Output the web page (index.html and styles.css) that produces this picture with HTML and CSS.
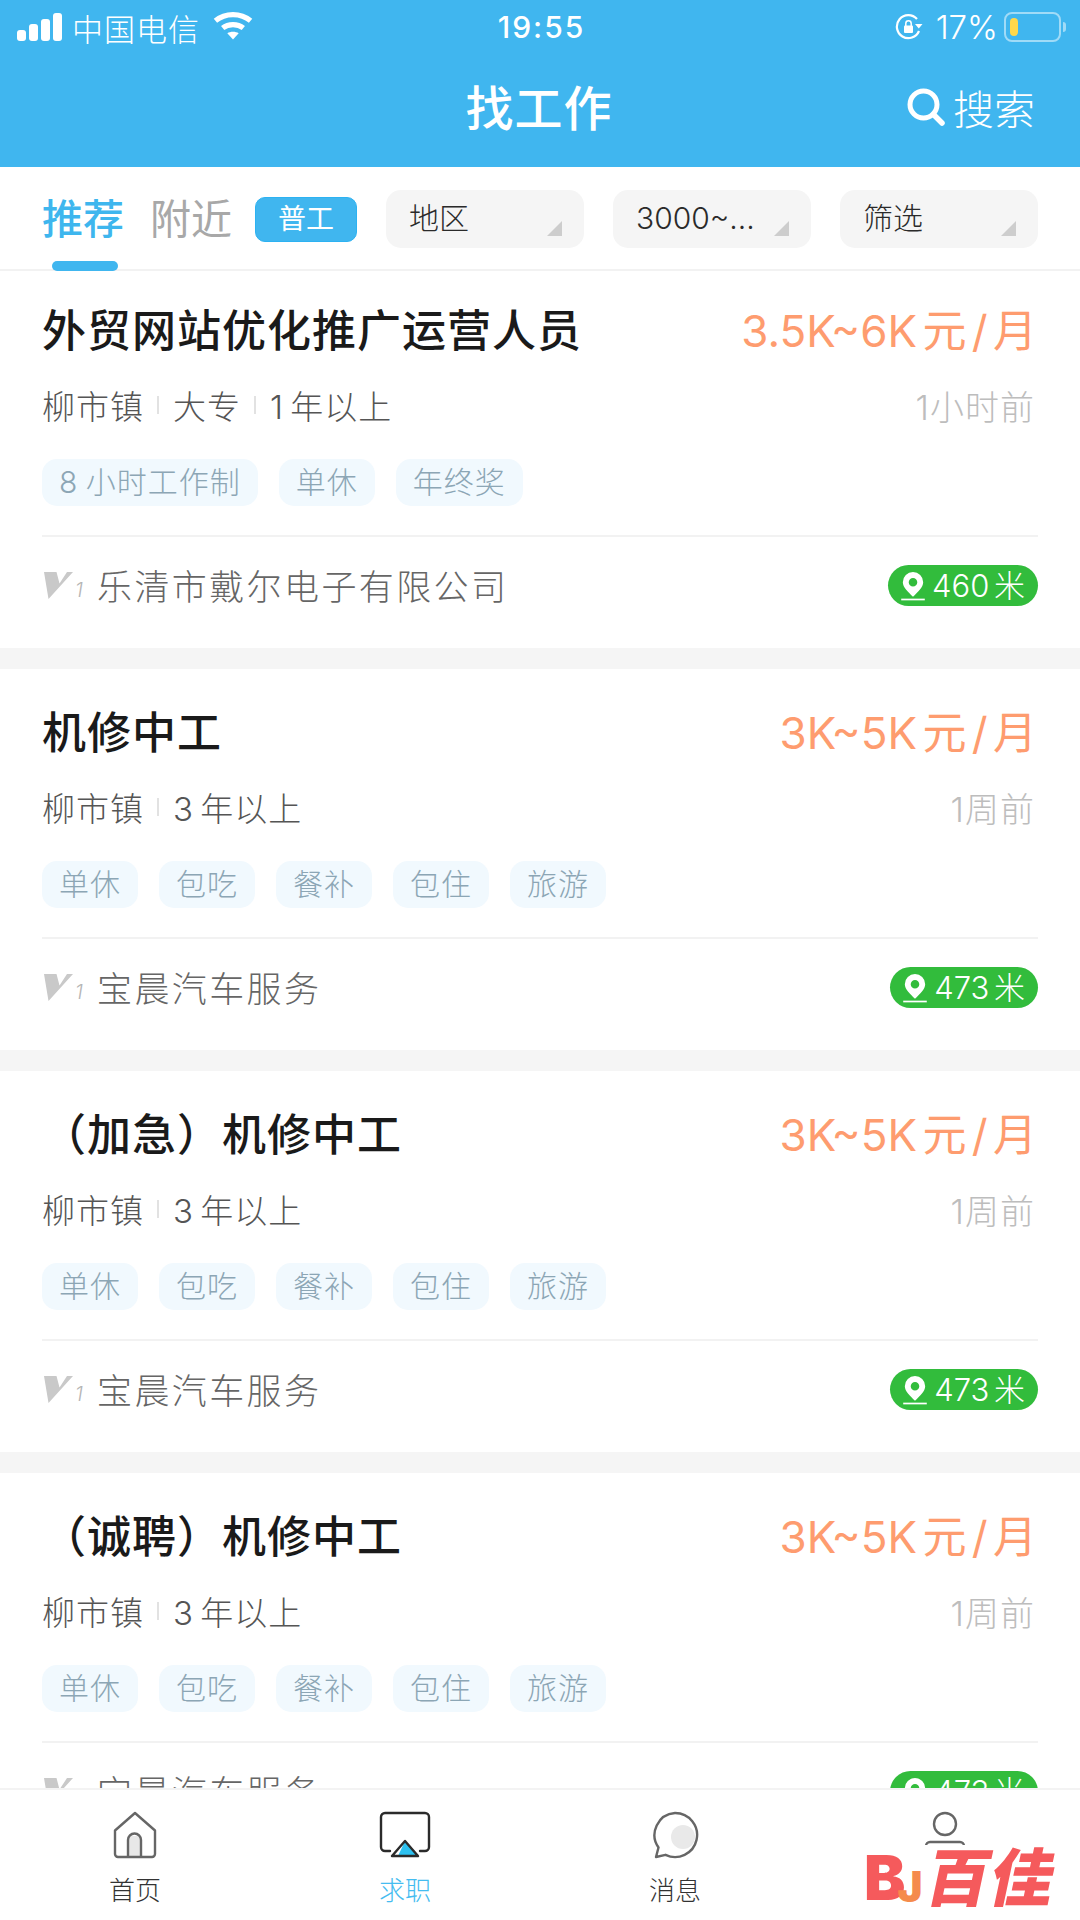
FILE: index.html
```html
<!DOCTYPE html>
<html lang="zh-CN">
<head>
    <meta charset="UTF-8">
    <meta name="viewport" content="width=device-width, initial-scale=1.0">
    <title>找工作</title>
    <link rel="stylesheet" href="styles.css">
</head>
<body>
<svg class="sprite" width="0" height="0">
    <symbol id="level-v" viewBox="0 0 29 27">
        <polygon points="0,0 12.5,0 15.5,11.5 23,0 29,0 4.5,27" fill="#c9c9c9"/>
    </symbol>
    <symbol id="pin" viewBox="0 0 22 28">
        <path fill="#fff" fill-rule="evenodd" d="M11 1a9.5 9.5 0 0 1 9.5 9.5c0 4.6-4.8 9-9.5 13.5C6.300 19.500 1.500 15.100 1.500 10.500A9.500 9.500 0 0 1 11 1zm0 5.500a4 4 0 1 0 0 8 4 4 0 0 0 0-8z"/>
        <rect x="0" y="25.800" width="22" height="1.600" fill="#fff"/>
    </symbol>
</svg>

<div class="page">
    <header class="top">
        <div class="status">
            <div class="status__left">
                <svg class="icon-signal" width="46" height="28" viewBox="0 0 46 28" fill="#fff">
                    <rect x="0" y="17" width="9" height="11" rx="3"/>
                    <rect x="12" y="11" width="9" height="17" rx="3"/>
                    <rect x="24" y="6" width="9" height="22" rx="3"/>
                    <rect x="36" y="0" width="9" height="28" rx="3"/>
                </svg>
                <span class="status__carrier">中国电信</span>
                <svg class="icon-wifi" width="42" height="31" viewBox="0 0 40 30">
                    <path d="M3 10.500C12.500 2.500 27.500 2.500 37 10.500" fill="none" stroke="#fff" stroke-width="5"/>
                    <path d="M10 17.500C15.500 13 24.500 13 30 17.500" fill="none" stroke="#fff" stroke-width="5"/>
                    <path d="M14.500 22.500C17.500 20.500 22.500 20.500 25.500 22.500L20 28.500Z" fill="#fff"/>
                </svg>
            </div>
            <div class="status__time">19:55</div>
            <div class="status__right">
                <svg class="icon-rotate" width="28" height="28" viewBox="0 0 28 28">
                    <path d="M24 18A11.500 11.500 0 1 1 22 6" fill="none" stroke="#fff" stroke-width="2.200"/>
                    <path d="M20 11h7.500l-3.700 4.500z" fill="#fff"/>
                    <rect x="9" y="12.500" width="9" height="7.500" rx="1" fill="#fff"/>
                    <path d="M10.800 13V10.500a2.700 2.700 0 0 1 5.400 0V13" fill="none" stroke="#fff" stroke-width="1.500"/>
                </svg>
                <span class="status__percent">17%</span>
                <div class="battery"><div class="battery__level"></div></div>
                <div class="battery__nub"></div>
            </div>
        </div>
        <div class="titlebar">
            <h1 class="titlebar__title">找工作</h1>
            <div class="titlebar__search">
                <svg width="38" height="38" viewBox="0 0 38 38">
                    <circle cx="16.500" cy="16.500" r="13.500" fill="none" stroke="#fff" stroke-width="5"/>
                    <path d="M26.500 26.500L35 35" stroke="#fff" stroke-width="5.500" stroke-linecap="round"/>
                </svg>
                <span>搜索</span>
            </div>
        </div>
    </header>

    <nav class="filters">
        <div class="tabs">
            <div class="tabs__item tabs__item_active">推荐</div>
            <div class="tabs__item">附近</div>
        </div>
        <div class="category">普工</div>
        <div class="filter">地区</div>
        <div class="filter">3000~...</div>
        <div class="filter">筛选</div>
    </nav>

    <main class="jobs">
        <article class="job">
            <div class="job__row">
                <h2 class="job__title">外贸网站优化推广运营人员</h2>
                <div class="job__pay">3.5K~6K 元 / 月</div>
            </div>
            <div class="job__row job__row_meta">
                <div class="job__meta"><span>柳市镇</span><i></i><span>大专</span><i></i><span>1 年以上</span></div>
                <div class="job__time">1小时前</div>
            </div>
            <div class="job__tags"><span>8 小时工作制</span><span>单休</span><span>年终奖</span></div>
            <div class="job__company">
                <svg class="job__level" width="29" height="27"><use href="#level-v"/></svg><em>1</em>
                <span class="job__name">乐清市戴尔电子有限公司</span>
                <div class="distance"><svg width="24" height="30"><use href="#pin"/></svg><span>460 米</span></div>
            </div>
        </article>

        <article class="job">
            <div class="job__row">
                <h2 class="job__title">机修中工</h2>
                <div class="job__pay">3K~5K 元 / 月</div>
            </div>
            <div class="job__row job__row_meta">
                <div class="job__meta"><span>柳市镇</span><i></i><span>3 年以上</span></div>
                <div class="job__time">1周前</div>
            </div>
            <div class="job__tags"><span>单休</span><span>包吃</span><span>餐补</span><span>包住</span><span>旅游</span></div>
            <div class="job__company">
                <svg class="job__level" width="29" height="27"><use href="#level-v"/></svg><em>1</em>
                <span class="job__name">宝晨汽车服务</span>
                <div class="distance"><svg width="24" height="30"><use href="#pin"/></svg><span>473 米</span></div>
            </div>
        </article>

        <article class="job">
            <div class="job__row">
                <h2 class="job__title">（加急）机修中工</h2>
                <div class="job__pay">3K~5K 元 / 月</div>
            </div>
            <div class="job__row job__row_meta">
                <div class="job__meta"><span>柳市镇</span><i></i><span>3 年以上</span></div>
                <div class="job__time">1周前</div>
            </div>
            <div class="job__tags"><span>单休</span><span>包吃</span><span>餐补</span><span>包住</span><span>旅游</span></div>
            <div class="job__company">
                <svg class="job__level" width="29" height="27"><use href="#level-v"/></svg><em>1</em>
                <span class="job__name">宝晨汽车服务</span>
                <div class="distance"><svg width="24" height="30"><use href="#pin"/></svg><span>473 米</span></div>
            </div>
        </article>

        <article class="job">
            <div class="job__row">
                <h2 class="job__title">（诚聘）机修中工</h2>
                <div class="job__pay">3K~5K 元 / 月</div>
            </div>
            <div class="job__row job__row_meta">
                <div class="job__meta"><span>柳市镇</span><i></i><span>3 年以上</span></div>
                <div class="job__time">1周前</div>
            </div>
            <div class="job__tags"><span>单休</span><span>包吃</span><span>餐补</span><span>包住</span><span>旅游</span></div>
            <div class="job__company">
                <svg class="job__level" width="29" height="27"><use href="#level-v"/></svg><em>1</em>
                <span class="job__name">宝晨汽车服务</span>
                <div class="distance"><svg width="24" height="30"><use href="#pin"/></svg><span>473 米</span></div>
            </div>
        </article>
    </main>

    <footer class="tabbar">
        <div class="tabbar__item">
            <svg width="46" height="48" viewBox="0 0 46 48">
                <rect x="16" y="25" width="13" height="21" fill="#e8e8e8"/>
                <path d="M23 2L43 19.500V43a3 3 0 0 1-3 3H6a3 3 0 0 1-3-3V19.500Z" fill="none" stroke="#666" stroke-width="2.400" stroke-linejoin="round"/>
                <path d="M16 46V29a6.500 6.500 0 0 1 13 0V46" fill="none" stroke="#666" stroke-width="2.400"/>
            </svg>
            <span>首页</span>
        </div>
        <div class="tabbar__item tabbar__item_active">
            <svg width="52" height="48" viewBox="0 0 52 48">
                <path d="M11 40H6a4 4 0 0 1-4-4V6a4 4 0 0 1 4-4h40a4 4 0 0 1 4 4v30a4 4 0 0 1-4 4h-5" fill="none" stroke="#2b2b2b" stroke-width="2.400" stroke-linecap="round"/>
                <path d="M26 30L39 45H13Z" fill="#2dc1f0"/>
                <path d="M26 30L13 45H19Z" fill="#fff"/>
                <path d="M26 30L39 45H13Z" fill="none" stroke="#2b2b2b" stroke-width="2.400" stroke-linejoin="round"/>
            </svg>
            <span>求职</span>
        </div>
        <div class="tabbar__item">
            <svg width="48" height="48" viewBox="0 0 48 48">
                <circle cx="32" cy="26" r="12" fill="#e9e9e9"/>
                <path d="M24 2a22 22 0 1 1-9.500 41.800L5 46l2.500-9.500A22 22 0 0 1 24 2z" fill="none" stroke="#666" stroke-width="2.400" stroke-linejoin="round"/>
            </svg>
            <span>消息</span>
        </div>
        <div class="tabbar__item">
            <svg width="42" height="48" viewBox="0 0 42 48">
                <circle cx="21" cy="13" r="11" fill="none" stroke="#666" stroke-width="2.400"/>
                <path d="M2 46V35a4 4 0 0 1 4-4h30a4 4 0 0 1 4 4v11" fill="none" stroke="#666" stroke-width="2.400"/>
            </svg>
        </div>
    </footer>

    <div class="watermark"><span class="watermark__b">B</span><span class="watermark__j">J</span><span class="watermark__name">百佳</span></div>
</div>
</body>
</html>
```

FILE: styles.css
```css
* { box-sizing: border-box; }
body {
    margin: 0;
    background: #fff;
    color: #222;
    font-family: Inter, "Noto Sans CJK SC", sans-serif;
}
h1, h2 { margin: 0; font-weight: 500; }
.sprite { position: absolute; }
.page {
    position: relative;
    display: flex;
    flex-direction: column;
    width: 1080px;
    height: 1920px;
    overflow: hidden;
}

/* Blue header */
.top {
    flex: none;
    height: 167px;
    background: #40b6ef;
    color: #fff;
}
.status {
    display: grid;
    grid-template-columns: 1fr auto 1fr;
    align-items: center;
    height: 54px;
    padding: 0 14px 0 17px;
}
.status__left, .status__right { display: flex; align-items: center; }
.status__right { justify-content: flex-end; }
.status__carrier { margin-left: 9px; font-size: 31px; font-weight: 300; letter-spacing: 1px; }
.icon-wifi { margin-left: 12px; margin-top: -4px; }
.status__time { font-size: 30px; font-weight: 500; letter-spacing: 2px; }
.status__percent { margin: 0 6px 0 13px; font-size: 33px; font-weight: 300; }
.battery {
    width: 57px;
    height: 30px;
    padding: 4px;
    border: 2px solid rgba(255, 255, 255, 0.5);
    border-radius: 8px;
}
.battery__level { width: 8px; height: 18px; border-radius: 4px; background: #ffd84a; }
.battery__nub {
    width: 3px;
    height: 10px;
    margin-left: 2px;
    border-radius: 0 3px 3px 0;
    background: rgba(255, 255, 255, 0.5);
}
.titlebar {
    position: relative;
    display: flex;
    justify-content: center;
    align-items: center;
    height: 106px;
}
.titlebar__title { margin: -4px 2px 0 0; font-size: 48px; font-weight: 500; letter-spacing: 1px; }
.titlebar__search {
    position: absolute;
    right: 45px;
    display: flex;
    align-items: center;
    gap: 8px;
    font-size: 41px;
    font-weight: 300;
}

/* Filter row */
.filters {
    position: relative;
    z-index: 1;
    flex: none;
    display: flex;
    align-items: center;
    height: 104px;
    margin-bottom: -4px;
    padding: 2px 42px 0;
    background: #fff;
    border-bottom: 2px solid #f2f2f2;
}
.tabs { display: flex; gap: 26px; }
.tabs__item {
    position: relative;
    font-size: 41px;
    line-height: 60px;
    color: #a8a8a8;
}
.tabs__item_active { color: #3eb6ee; font-weight: 500; }
.tabs__item_active::after {
    content: "";
    position: absolute;
    left: 10px;
    bottom: -22px;
    width: 66px;
    height: 10px;
    border-radius: 5px;
    background: #40b6ef;
}
.category {
    flex: none;
    width: 102px;
    height: 45px;
    margin-left: 23px;
    border: 1px solid #2cb2f2;
    border-radius: 10px;
    background: #40b6ef;
    color: #fff;
    font-size: 28px;
    line-height: 42px;
    text-align: center;
}
.filter {
    flex: none;
    position: relative;
    width: 198px;
    height: 58px;
    margin-left: 29px;
    padding-left: 23px;
    border-radius: 15px;
    background: #f5f5f5;
    font-size: 30px;
    font-weight: 300;
    line-height: 56px;
    color: #2a2a2a;
}
.filter::after {
    content: "";
    position: absolute;
    right: 22px;
    bottom: 12px;
    width: 15px;
    height: 15px;
    background: #cdcdcd;
    clip-path: polygon(100% 0, 100% 100%, 0 100%);
}

/* Job cards */
.jobs {
    flex: 1;
    min-height: 0;
    overflow: hidden;
    background: #f5f5f5;
}
.job {
    height: 381px;
    margin-bottom: 21px;
    padding: 31px 42px 0;
    background: #fff;
}
.job__row {
    display: flex;
    justify-content: space-between;
    align-items: center;
    height: 60px;
}
.job__row_meta { height: 46px; margin-top: 24px; }
.job__title { font-size: 44px; letter-spacing: 1px; color: #1a1a1a; }
.job__pay { margin-right: 1px; font-size: 44px; color: #fe9c6f; word-spacing: -7px; }
.job__meta {
    display: flex;
    align-items: center;
    font-size: 33px;
    font-weight: 300;
    letter-spacing: 1px;
    word-spacing: -4px;
    color: #555;
}
.job__meta i { width: 2px; height: 18px; margin: 0 14px 0 13px; background: #e2e2e2; }
.job__time { margin-right: 3px; font-size: 34px; font-weight: 300; letter-spacing: 1px; color: #bdbdbd; }
.job__tags {
    display: flex;
    gap: 21px;
    margin-top: 31px;
    padding-bottom: 29px;
    border-bottom: 2px solid #f2f2f2;
}
.job__tags span {
    height: 47px;
    padding: 0 17px;
    border-radius: 15px;
    background: #f1f9fe;
    font-size: 30px;
    font-weight: 300;
    letter-spacing: 1px;
    word-spacing: -2px;
    line-height: 47px;
    color: #8ca6b5;
}
.job__company {
    display: flex;
    align-items: center;
    height: 41px;
    margin-top: 28px;
}
.job__level { margin-left: 2px; }
.job__company em {
    width: 15px;
    margin: 8px 0 0 2px;
    font-size: 20px;
    font-weight: 300;
    color: #b5b5b5;
}
.job__name {
    margin: -2px 0 0 7px;
    font-size: 35px;
    font-weight: 300;
    letter-spacing: 2.400px;
    color: #666;
}
.distance {
    display: flex;
    align-items: center;
    gap: 7px;
    height: 41px;
    margin-left: auto;
    padding: 0 13px;
    border-radius: 21px;
    background: #32bc3c;
    color: #fff;
    font-size: 31px;
    font-weight: 300;
    word-spacing: -4px;
}
.distance span { margin-top: -4px; }

/* Bottom bar */
.tabbar {
    flex: none;
    display: flex;
    height: 132px;
    border-top: 2px solid #f3f3f3;
    background: #fff;
}
.tabbar__item {
    flex: 1;
    display: flex;
    flex-direction: column;
    align-items: center;
    padding-top: 21px;
    font-size: 26px;
    line-height: 36px;
    color: #333;
}
.tabbar__item span { margin-top: 14px; font-weight: 300; }
.tabbar__item_active { color: #45bcf0; }

/* Corner watermark lies over the last tab */
.watermark {
    position: absolute;
    right: 24px;
    bottom: 5px;
    display: flex;
    align-items: center;
    width: 194px;
    height: 70px;
    padding: 0 0 4px 2px;
    background: #fff;
    font-weight: 900;
    line-height: 60px;
    white-space: nowrap;
    color: #f55a5c;
}
.watermark__b { font-size: 62px; }
.watermark__j { margin-left: -8px; padding-top: 18px; font-size: 42px; color: #f58b4c; }
.watermark__name {
    margin-left: 6px;
    font-size: 63px;
    letter-spacing: 1px;
    transform: skewX(-12deg);
}
```
